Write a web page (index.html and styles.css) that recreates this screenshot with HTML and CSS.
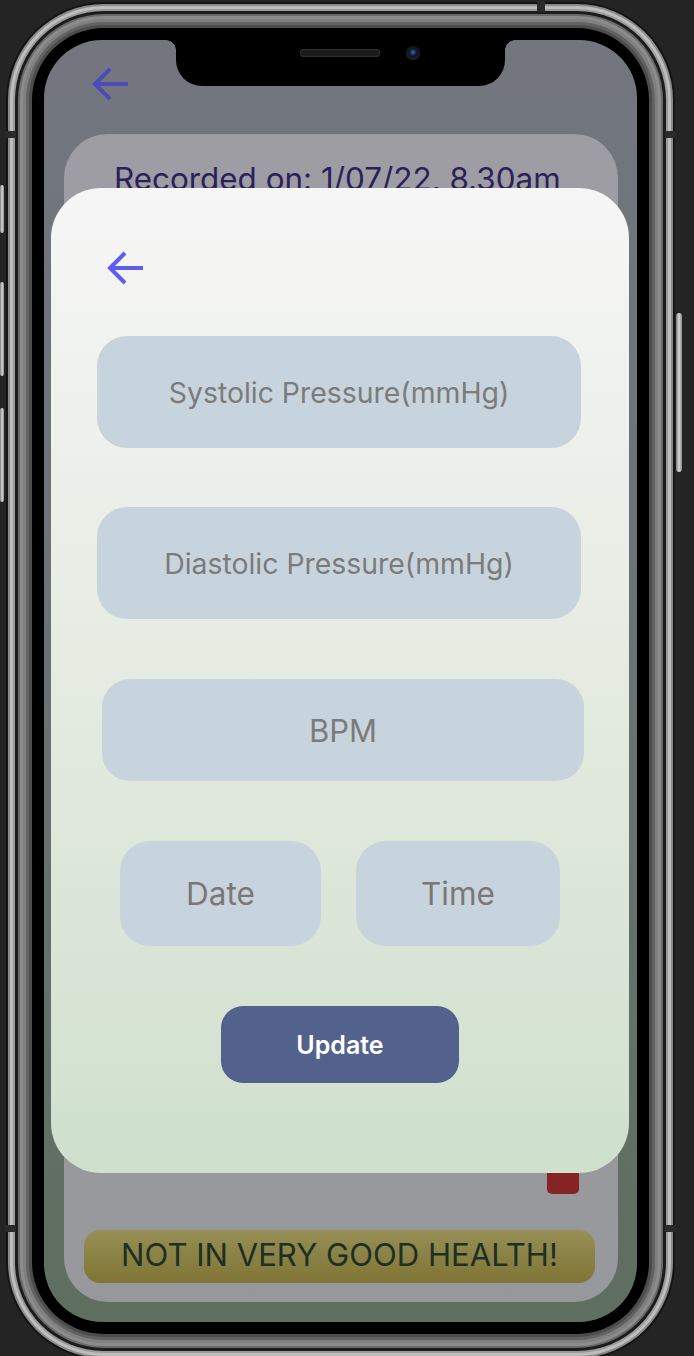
FILE: index.html
```html
<!DOCTYPE html>
<html>
<head>
<meta charset="utf-8">
<link rel="stylesheet" href="styles.css">
</head>
<body>
<div class="bezel">
  <span class="btn btn-mute"></span>
  <span class="btn btn-volup"></span>
  <span class="btn btn-voldown"></span>
  <span class="btn btn-power"></span>
  <span class="band band-tl"></span>
  <span class="band band-tr"></span>
  <span class="band band-bl"></span>
  <span class="band band-br"></span>
  <span class="band band-top"></span>
  <div class="screen">
    <div class="app">
      <svg class="back back-app" viewBox="0 0 38 36" width="38" height="36">
        <path d="M36 18H4M18 3L3 18l15 15" fill="none" stroke="currentColor" stroke-width="4" stroke-linecap="butt"/>
      </svg>
      <div class="card">
        <p class="recorded">Recorded on: 1/07/22, 8.30am</p>
        <div class="card-bottom">
          <div class="red-flag"></div>
          <div class="banner">NOT IN VERY GOOD HEALTH!</div>
        </div>
      </div>
    </div>
    <div class="notch">
      <span class="speaker"></span>
      <span class="camera"></span>
    </div>
    <div class="modal">
      <svg class="back back-modal" viewBox="0 0 38 36" width="38" height="36">
        <path d="M36 18H4M18 3L3 18l15 15" fill="none" stroke="currentColor" stroke-width="4" stroke-linecap="butt"/>
      </svg>
      <div class="field field-wide">Systolic Pressure(mmHg)</div>
      <div class="field field-wide">Diastolic Pressure(mmHg)</div>
      <div class="field field-bpm">BPM</div>
      <div class="row">
        <div class="field field-date">Date</div>
        <div class="field field-time">Time</div>
      </div>
      <div class="update">Update</div>
    </div>
  </div>
</div>
</body>
</html>
```
FILE: styles.css
```css
html, body {
  margin: 0;
  height: 100%;
}
body {
  background: #242424;
  padding: 28px 0 0 32px;
  box-sizing: border-box;
  overflow: hidden;
  font-family: Inter, "Noto Sans", sans-serif;
}
.bezel {
  position: relative;
  width: 617px;
  height: 1306px;
  box-sizing: border-box;
  padding: 12px;
  background: #000;
  border-radius: 72px;
  box-shadow:
    0 0 0 3px #4c4c4c,
    0 0 0 6px #626262,
    0 0 0 9px #808080,
    0 0 0 12px #8c8c8c,
    0 0 0 14px #6a6a6a,
    0 0 0 17px #1c1c1c,
    0 0 0 19px #9a9a9a,
    0 0 0 22px #bdbdbd,
    0 0 0 24px #8a8a8a,
    0 0 0 26px #141414;
}
.btn {
  position: absolute;
  background: linear-gradient(90deg, #777, #d8d8d8 50%, #888);
  border-radius: 2px;
}
.btn-mute { left: -32px; top: 157px; width: 4px; height: 48px; }
.btn-volup { left: -32px; top: 254px; width: 4px; height: 94px; }
.btn-voldown { left: -32px; top: 380px; width: 4px; height: 94px; }
.btn-power { left: 644px; top: 285px; width: 6px; height: 159px; border-radius: 3px; }
.band {
  position: absolute;
  background: #2a2a2a;
}
.band-tl { left: -27px; top: 103px; width: 11px; height: 7px; }
.band-bl { left: -27px; top: 1197px; width: 11px; height: 7px; }
.band-tr { left: 633px; top: 103px; width: 11px; height: 7px; }
.band-br { left: 633px; top: 1197px; width: 11px; height: 7px; }
.band-top { left: 505px; top: -27px; width: 8px; height: 11px; }

.screen {
  position: relative;
  height: 100%;
  border-radius: 58px;
  overflow: hidden;
  background: linear-gradient(180deg, #73767f 0%, #6b7273 50%, #5e6e5f 100%);
}
.app {
  height: 100%;
  box-sizing: border-box;
  padding: 26px 19px 20px 20px;
  display: flex;
  flex-direction: column;
}
.back {
  display: block;
  flex: none;
}
.back-app {
  color: #4b4bb8;
  margin-left: 28px;
}
.card {
  margin-top: 32px;
  flex: 1;
  background: linear-gradient(180deg, #9e9da3 0%, #97989c 100%);
  border-radius: 44px;
  display: flex;
  flex-direction: column;
  padding: 0 23px 19px 20px;
}
.recorded {
  margin: 26px 0 0 30px;
  font-size: 31.4px;
  color: #2b1f5c;
  white-space: nowrap;
}
.card-bottom {
  margin-top: auto;
  display: flex;
  flex-direction: column;
}
.red-flag {
  align-self: flex-end;
  width: 32px;
  height: 32px;
  background: #862424;
  border-radius: 5px;
  margin-right: 16px;
}
.banner {
  margin-top: 36px;
  height: 53px;
  border-radius: 16px;
  background: linear-gradient(180deg, #968f56 0%, #7e7434 100%);
  color: #1e2f23;
  font-size: 31.1px;
  display: flex;
  align-items: center;
  justify-content: center;
  padding-left: 0;
  padding-bottom: 4px;
  box-sizing: border-box;
  white-space: nowrap;
}
.notch {
  position: absolute;
  top: 0;
  left: 50%;
  width: 329px;
  height: 46px;
  margin-left: -165px;
  background: #000;
  border-radius: 0 0 26px 26px;
}
.notch::before, .notch::after {
  content: "";
  position: absolute;
  top: 0;
  width: 10px;
  height: 10px;
}
.notch::before {
  left: -10px;
  background: radial-gradient(circle at 0 100%, transparent 9.5px, #000 10px);
}
.notch::after {
  right: -10px;
  background: radial-gradient(circle at 100% 100%, transparent 9.5px, #000 10px);
}
.speaker {
  position: absolute;
  left: 124px;
  top: 9px;
  width: 80px;
  height: 8px;
  border-radius: 4px;
  background: #1b1b1b;
  box-shadow: inset 0 0 0 1px #2e2e2e;
}
.camera {
  position: absolute;
  left: 230px;
  top: 6px;
  width: 14px;
  height: 14px;
  border-radius: 50%;
  background: radial-gradient(circle at 50% 45%, #3b6fb5 0, #1e3a6a 2px, #0d1626 4px, #161a20 6px, #232323 7px);
}
.modal {
  position: absolute;
  left: 7px;
  right: 8px;
  top: 148px;
  height: 985px;
  border-radius: 50px;
  background: linear-gradient(180deg, #f6f6f6 0%, #e5ebe1 50%, #cfe0cd 100%);
  display: flex;
  flex-direction: column;
  align-items: flex-start;
  padding: 62px 0 0 0;
  box-sizing: border-box;
}
.back-modal {
  color: #5c5cf0;
  margin-left: 56px;
}
.field {
  background: #c8d4dd;
  color: #7b7b7b;
  display: flex;
  align-items: center;
  justify-content: center;
  font-size: 28.4px;
  box-sizing: border-box;
}
.field-wide {
  margin-left: 46px;
  width: 484px;
  height: 112px;
  border-radius: 30px;
  margin-bottom: 59px;
}
.back-modal + .field-wide {
  margin-top: 50px;
}
.field-bpm {
  margin-left: 51px;
  width: 482px;
  height: 102px;
  border-radius: 28px;
  font-size: 31px;
  margin-top: 1px;
}
.row {
  display: flex;
  gap: 35px;
  margin: 60px 0 0 69px;
}
.field-date, .field-time {
  height: 105px;
  border-radius: 30px;
  font-size: 31.5px;
  color: #7b7777;
}
.field-date { width: 201px; }
.field-time { width: 204px; }
.update {
  margin: 60px 0 0 170px;
  width: 238px;
  height: 77px;
  border-radius: 22px;
  background: #53628c;
  color: #fff;
  font-weight: 600;
  font-size: 25px;
  display: flex;
  align-items: center;
  justify-content: center;
}
```
